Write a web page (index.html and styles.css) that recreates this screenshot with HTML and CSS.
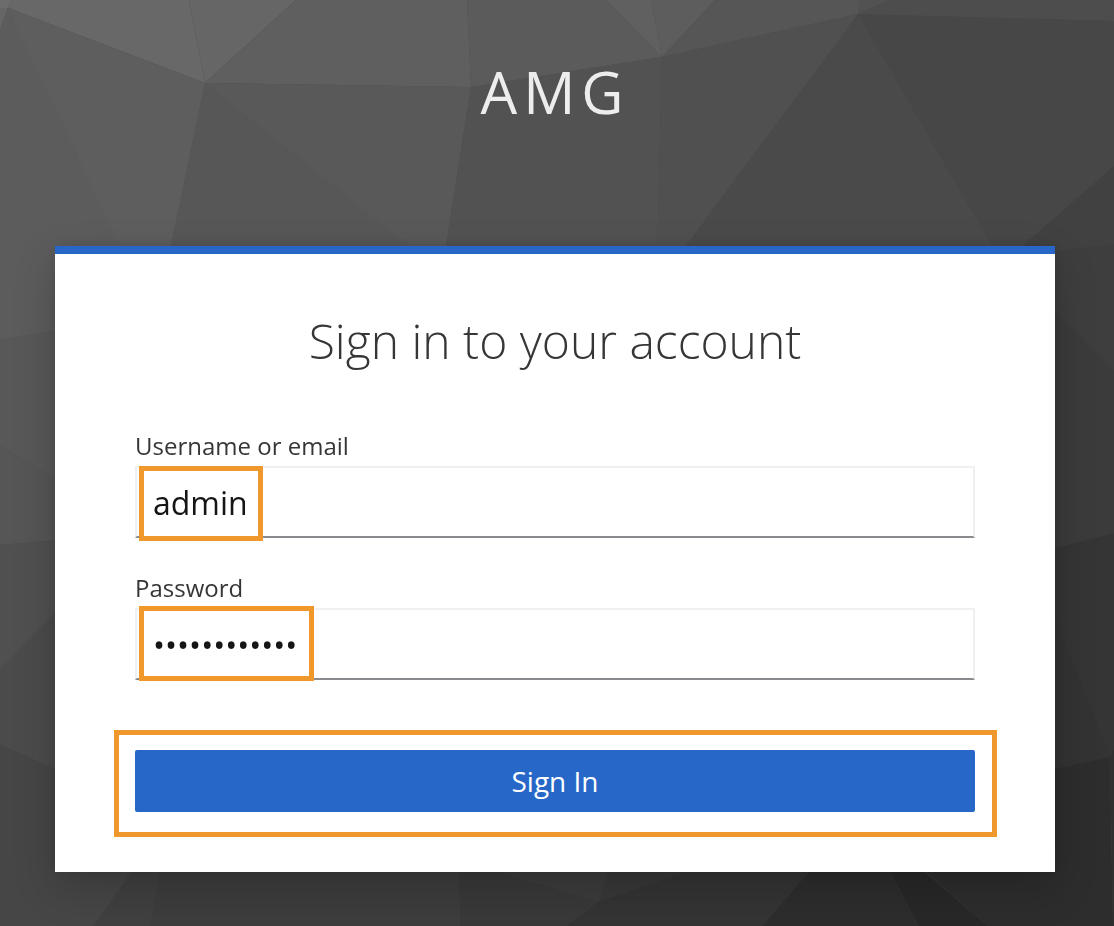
FILE: index.html
```
<!DOCTYPE html>
<html lang="en">
<head>
<meta charset="utf-8">
<meta name="viewport" content="width=device-width, initial-scale=1">
<title>Sign in to AMG</title>
<link rel="stylesheet" href="styles.css">
</head>
<body>
<svg class="backdrop" viewBox="0 0 1114 926" preserveAspectRatio="xMidYMid slice" aria-hidden="true">
  <rect width="1114" height="926" fill="#4a4a4a"/>
  <!-- upper facets -->
  <path fill="#6c6c6c" d="M0 0H12L8 8H0z"/>
  <path fill="#666" d="M0 8H8L0 30z"/>
  <path fill="#686868" d="M12 0H189L205 83 8 8z"/>
  <path fill="#666" d="M189 0H296L205 83z"/>
  <path fill="#5f5f5f" d="M296 0H467L471 87 205 83z"/>
  <path fill="#5b5b5b" d="M467 0H606L662 57 471 87z"/>
  <path fill="#606060" d="M606 0H651L662 57z"/>
  <path fill="#5d5d5d" d="M651 0H715L662 57z"/>
  <path fill="#565656" d="M715 0H860L858 14 662 57z"/>
  <path fill="#525252" d="M860 0H890L858 14z"/>
  <path fill="#4d4d4d" d="M890 0H1114V21L858 14z"/>
  <path fill="#5e5e5e" d="M8 8 205 83 171 246 157 320 0 339V30z"/>
  <path fill="#5c5c5c" d="M8 8 120 246 157 320 0 339V30z"/>
  <path fill="#595959" d="M205 83 471 87 446 246 440 300H160L171 246z"/>
  <path fill="#575757" d="M205 83 410 246 440 300H160L171 246z"/>
  <path fill="#525252" d="M471 87 662 57 656 300H440L446 246z"/>
  <path fill="#505050" d="M662 57 858 14 686 246 650 300H656z"/>
  <path fill="#4a4a4a" d="M858 14 997 246 1020 300H650L686 246z"/>
  <path fill="#474747" d="M858 14 1114 21V166L1022 246 1000 260z"/>
  <path fill="#414141" d="M1114 166V244L1010 257 1022 246z"/>
  <!-- left edge -->
  <path fill="#585858" d="M0 339 80 326V494L0 446z"/>
  <path fill="#565656" d="M0 446 80 494V538L0 545z"/>
  <path fill="#505050" d="M0 545 80 538V586L0 670z"/>
  <path fill="#4b4b4b" d="M0 670 80 586V781L0 744z"/>
  <path fill="#464646" d="M0 744 80 781 140 860 93 926H0z"/>
  <!-- right edge -->
  <path fill="#3e3e3e" d="M1030 254 1114 244V370L1030 285z"/>
  <path fill="#3b3b3b" d="M1030 285 1114 370V533L1030 554z"/>
  <path fill="#353535" d="M1030 554 1114 533V748L1110 757 1030 774z"/>
  <path fill="#333" d="M1030 554 1110 757 1030 774z"/>
  <path fill="#2d2d2d" d="M900 850 1030 774 1110 757 1113 926H988z"/>
  <path fill="#303030" d="M1110 757 1114 748V926H1113z"/>
  <!-- lower edge -->
  <path fill="#404040" d="M140 860H161L150 926H93z"/>
  <path fill="#3d3d3d" d="M161 860H458L460 926H150z"/>
  <path fill="#393939" d="M458 860 599 901 566 926H460z"/>
  <path fill="#3c3c3c" d="M458 860H610L599 901z"/>
  <path fill="#383838" d="M610 860H720L599 901z"/>
  <path fill="#343434" d="M599 901 720 860H819L762 926H566z"/>
  <path fill="#2d2d2d" d="M819 860H884L918 926H762z"/>
  <path fill="#282828" d="M884 860H911L988 926H918z"/>
</svg>
<div class="page">
  <header class="brand">AMG</header>
  <main class="card">
    <h1 class="title">Sign in to your account</h1>
    <form class="form">
      <div class="field">
        <label class="label" for="username">Username or email</label>
        <div class="control">
          <input class="input" id="username" name="username" type="text" value="admin">
          <span class="mark mark-username"></span>
        </div>
      </div>
      <div class="field">
        <label class="label" for="password">Password</label>
        <div class="control">
          <input class="input" id="password" name="password" type="password" value="adminadmin12">
          <span class="mark mark-password"></span>
        </div>
      </div>
      <div class="control actions">
        <button class="submit" type="button">Sign In</button>
        <span class="mark mark-submit"></span>
      </div>
    </form>
  </main>
</div>
</body>
</html>
```
FILE: styles.css
```
* {
  box-sizing: border-box;
}

body {
  margin: 0;
  min-height: 100vh;
  background: #4a4a4a;
  color: #363636;
  font-family: "Open Sans", "Noto Sans", sans-serif;
}

.backdrop {
  position: fixed;
  inset: 0;
  width: 100%;
  height: 100%;
}

.page {
  position: relative;
  padding: 52px 59px 54px 55px;
}

.brand {
  margin-bottom: 114px;
  color: #ededed;
  font-size: 58px;
  line-height: 80px;
  letter-spacing: 6px;
  text-align: center;
}

.card {
  max-width: 1000px;
  margin: 0 auto;
  padding: 56px 80px 60px;
  border-top: 8px solid #2667c8;
  background: #fff;
  box-shadow: 0 16px 40px rgba(3, 3, 3, 0.2), 0 0 12px rgba(3, 3, 3, 0.1);
}

.title {
  margin: 0 0 56px;
  font-size: 48px;
  font-weight: 300;
  line-height: 62px;
  text-align: center;
}

.form {
  display: flex;
  flex-direction: column;
  gap: 32px;
}

.field {
  display: flex;
  flex-direction: column;
  gap: 2px;
}

.label {
  font-size: 24px;
  line-height: 36px;
}

.control {
  position: relative;
}

.input {
  display: block;
  width: 100%;
  height: 72px;
  padding: 0 16px;
  border: 2px solid #f0f0f0;
  border-bottom-color: #8a8a8e;
  border-radius: 0;
  background: #fff;
  color: #151515;
  font: inherit;
  font-size: 32px;
  outline: 0;
}

.actions {
  margin-top: 38px;
}

.submit {
  display: block;
  width: 100%;
  padding: 10px;
  border: 0;
  border-radius: 2px;
  background: #2667c8;
  color: #fff;
  font: inherit;
  font-size: 28px;
  line-height: 42px;
}

.mark {
  position: absolute;
  border: 5px solid #f0982b;
  pointer-events: none;
}

.mark-username {
  top: 0;
  left: 4px;
  width: 124px;
  height: 75px;
}

.mark-password {
  top: -2px;
  left: 4px;
  width: 175px;
  height: 75px;
}

.mark-submit {
  inset: -20px -22px -25px -21px;
}
```
